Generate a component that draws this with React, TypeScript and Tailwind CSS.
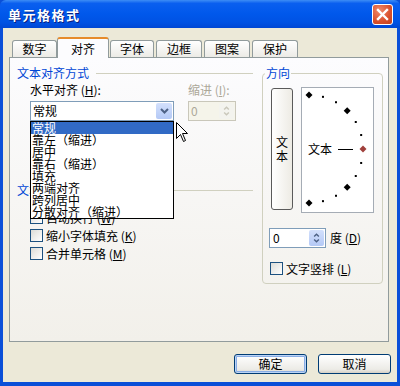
import React from "react";

const tabs = [
  { label: "数字", w: "w-[45px]", ml: "" },
  { label: "对齐", w: "w-[52px]", ml: "", active: true },
  { label: "字体", w: "w-[44px]", ml: "ml-[1px]" },
  { label: "边框", w: "w-[46px]", ml: "ml-[2px]" },
  { label: "图案", w: "w-[46px]", ml: "ml-[2px]" },
  { label: "保护", w: "w-[46px]", ml: "ml-[2px]" },
];

const listItems = [
  "常规",
  "靠左（缩进）",
  "居中",
  "靠右（缩进）",
  "填充",
  "两端对齐",
  "跨列居中",
  "分散对齐（缩进）",
];

const Check = () => (
  <span className="inline-block w-[13px] h-[13px] border border-[#1C5180] bg-[linear-gradient(135deg,#DCDCD7,#FFFFFF)] shrink-0" />
);

const SpinBtn = ({ disabled }: { disabled?: boolean }) => (
  <div
    className={`w-[15px] h-full flex flex-col ${
      disabled ? "bg-[#F3F3EE]" : "bg-[linear-gradient(to_bottom,#D3E0FC,#B4C9F6)]"
    } rounded-[2px]`}
  >
    <svg width="15" height="17" viewBox="0 0 15 17">
      <path
        d="M5 7 L7.5 4.5 L10 7"
        fill="none"
        stroke={disabled ? "#C9C7BA" : "#4D6185"}
        strokeWidth="1.5"
      />
      <path
        d="M5 10 L7.5 12.5 L10 10"
        fill="none"
        stroke={disabled ? "#C9C7BA" : "#4D6185"}
        strokeWidth="1.5"
      />
    </svg>
  </div>
);

const GroupHead = ({ label }: { label: string }) => (
  <div className="h-[14px] flex items-center">
    <span className="text-[#0046D5] leading-[12px]">{label}</span>
    <div className="flex-1 h-px bg-[#D0D0BF] ml-[7px]" />
  </div>
);

const Dial = () => {
  const cx = 7;
  const cy = 61;
  const r = 54;
  const pt = (deg: number) => {
    const a = (deg * Math.PI) / 180;
    return [cx + r * Math.cos(a), cy - r * Math.sin(a)];
  };
  const big = [90, 45, -45, -90];
  const small = [75, 60, 30, 15, -15, -30, -60, -75];
  return (
    <div className="relative w-[73px] h-[126px] border border-[#A5ACB5] bg-white -mt-[1px] ml-[8px]">
      <svg width="71" height="124" className="absolute left-0 top-0">
        {big.map((d) => {
          const [x, y] = pt(d);
          return (
            <polygon
              key={d}
              points={`${x},${y - 3.5} ${x + 3.5},${y} ${x},${y + 3.5} ${x - 3.5},${y}`}
              fill="#000"
            />
          );
        })}
        {small.map((d) => {
          const [x, y] = pt(d);
          return <rect key={d} x={x - 1} y={y - 1} width="2" height="2" fill="#000" />;
        })}
        <polygon points="61,57.5 64.5,61 61,64.5 57.5,61" fill="#A0403C" />
        <line x1="36" y1="61.5" x2="51" y2="61.5" stroke="#000" strokeWidth="1" />
      </svg>
      <span className="absolute left-[6px] top-[54px] leading-[14px]">文本</span>
    </div>
  );
};

export default function App() {
  return (
    <div className="relative w-[400px] h-[386px] bg-[#0A4FD8] flex flex-col text-[12px] text-black font-['Noto_Sans_CJK_SC','Liberation_Sans',sans-serif] overflow-hidden">
      {/* title bar */}
      <div className="h-[28px] shrink-0 flex items-center justify-between pl-[8px] pr-[7px] bg-[linear-gradient(to_bottom,#3D8DF5_0%,#0A5FEF_12%,#0058EB_50%,#0052E3_80%,#0047D4_100%)] rounded-t-[6px]">
        <span className="text-white font-bold text-[13px] tracking-[1.5px] leading-none [text-shadow:1px_1px_0_#0A1F80]">
          单元格格式
        </span>
        <div className="w-[21px] h-[21px] rounded-[3px] border border-white bg-[radial-gradient(circle_at_35%_30%,#F08A6C,#D9502C_60%,#C2401E)] flex items-center justify-center">
          <svg width="13" height="13" viewBox="0 0 13 13">
            <path d="M2 2 L11 11 M11 2 L2 11" stroke="#fff" strokeWidth="2.4" strokeLinecap="square" />
          </svg>
        </div>
      </div>

      {/* body */}
      <div className="flex-1 ml-[3px] mr-[3px] mb-[4px] bg-[#ECE9D8] flex flex-col pt-[9px]">
        {/* tabs */}
        <div className="h-[20px] flex items-end ml-[9px]">
          {tabs.map((t) =>
            t.active ? (
              <div
                key={t.label}
                className={`${t.w} h-[21px] -mb-[1px] relative z-10 border border-b-0 border-[#919B9C] border-t-[#E68B2C] border-t-2 rounded-t-[3px] bg-[#FCFCFE] flex items-center justify-center`}
              >
                {t.label}
              </div>
            ) : (
              <div
                key={t.label}
                className={`${t.w} ${t.ml} h-[17px] border border-b-0 border-[#919B9C] rounded-t-[3px] bg-[linear-gradient(to_bottom,#FFFFFF,#ECEBE6)] flex items-center justify-center`}
              >
                {t.label}
              </div>
            )
          )}
        </div>

        {/* panel */}
        <div className="ml-[6px] w-[380px] h-[285px] border border-[#919B9C] bg-[linear-gradient(to_bottom,#FCFCFE,#F2F0EA)] flex">
          {/* left column */}
          <div className="w-[236px] ml-[7px] flex flex-col">
            <div className="mt-[8px]">
              <GroupHead label="文本对齐方式" />
            </div>
            <div className="mt-[4px] h-[12px] flex pl-[13px] leading-[12px]">
              <span className="w-[158px]">
                水平对齐 (<u>H</u>):
              </span>
              <span className="text-[#ACA899]">
                缩进 (<u>I</u>):
              </span>
            </div>
            <div className="mt-[5px] h-[20px] flex pl-[13px]">
              <div className="w-[144px] h-[20px] border border-[#7F9DB9] bg-white flex items-center justify-between pl-[2px] pr-[1px]">
                <span className="leading-[12px]">常规</span>
                <div className="w-[16px] h-[16px] rounded-[2px] bg-[linear-gradient(to_bottom,#D3E0FC,#B4C9F6)] flex items-center justify-center">
                  <svg width="9" height="6" viewBox="0 0 9 6">
                    <path d="M1 1 L4.5 4.5 L8 1" fill="none" stroke="#4D6185" strokeWidth="2" />
                  </svg>
                </div>
              </div>
              <div className="ml-[14px] w-[48px] h-[20px] border border-[#C9C7BA] bg-[#F5F4EA] flex items-center justify-between pl-[2px] pr-[1px] py-[1px]">
                <span className="text-[#ACA899] leading-[12px]">0</span>
                <SpinBtn disabled />
              </div>
            </div>

            {/* area covered by the open list */}
            <div className="h-[62px]" />

            <GroupHead label="文本控制" />
            <div className="mt-[14px] flex flex-col gap-[5px] pl-[13px]">
              {[
                ["自动换行 ", "W"],
                ["缩小字体填充 ", "K"],
                ["合并单元格 ", "M"],
              ].map(([l, k]) => (
                <div key={k} className="h-[13px] flex items-center">
                  <Check />
                  <span className="ml-[3px] leading-[12px]">
                    {l}(<u>{k}</u>)
                  </span>
                </div>
              ))}
            </div>
          </div>

          {/* direction group */}
          <fieldset className="ml-[9px] mt-[9px] w-[121px] h-[217px] border border-[#D0D0BF] rounded-[4px]">
            <legend className="ml-[2px] px-[1px] leading-[12px] text-[#0046D5]">方向</legend>
            <div className="mt-[9px] pl-[8px] flex items-start">
              <div className="w-[22px] h-[122px] rounded-[3px] border border-[#5A5A5A] bg-[linear-gradient(to_right,#FFFFFF,#EDEBE4)] flex flex-col items-center justify-center leading-[14px]">
                <span>文</span>
                <span>本</span>
              </div>
              <Dial />
            </div>
            <div className="mt-[15px] pl-[6px] flex items-center">
              <div className="w-[57px] h-[20px] border border-[#7F9DB9] bg-white flex items-center justify-between pl-[3px] pr-[1px] py-[1px]">
                <span className="leading-[12px]">0</span>
                <SpinBtn />
              </div>
              <span className="ml-[4px] leading-[12px]">
                度 (<u>D</u>)
              </span>
            </div>
            <div className="mt-[14px] pl-[7px] h-[13px] flex items-center">
              <Check />
              <span className="ml-[3px] leading-[12px]">
                文字竖排 (<u>L</u>)
              </span>
            </div>
          </fieldset>
        </div>

        {/* buttons */}
        <div className="mt-[12px] flex justify-end pr-[6px]">
          <button className="w-[73px] h-[20px] rounded-[3px] border border-[#003C74] bg-[linear-gradient(to_bottom,#FFFFFF,#ECEBE6_80%,#D6D0C5)] shadow-[inset_0_0_0_1px_#BCD4F6,inset_0_0_0_2px_#89ADE4] leading-[12px]">
            确定
          </button>
          <button className="ml-[11px] w-[73px] h-[20px] rounded-[3px] border border-[#003C74] bg-[linear-gradient(to_bottom,#FFFFFF,#ECEBE6_80%,#D6D0C5)] leading-[12px]">
            取消
          </button>
        </div>
      </div>

      {/* open dropdown list */}
      <div className="absolute left-[30px] top-[121px] w-[144px] border border-black bg-white flex flex-col z-20">
        {listItems.map((it, i) => (
          <div
            key={it}
            className={`h-[12px] leading-[12px] pl-[1px] whitespace-nowrap ${
              i === 0 ? "bg-[#316AC5] text-white" : ""
            }`}
          >
            {it}
          </div>
        ))}
      </div>

      {/* mouse cursor */}
      <svg className="absolute left-[176px] top-[122px] z-30" width="13" height="21" viewBox="0 0 13 21">
        <path
          d="M0.5 0.5 L0.5 16.5 L4.5 12.5 L7.5 19.5 L9.5 18.5 L6.5 11.5 L11.5 11.5 Z"
          fill="#fff"
          stroke="#000"
          strokeWidth="1"
        />
      </svg>
    </div>
  );
}
